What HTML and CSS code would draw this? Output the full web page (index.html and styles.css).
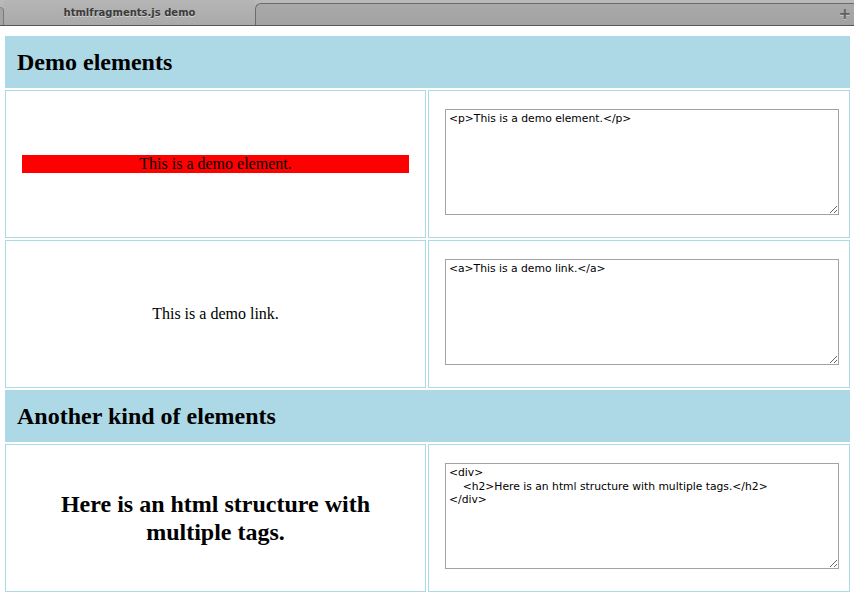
FILE: index.html
```html
<!DOCTYPE html>
<html>
<head>
<meta charset="utf-8">
<title>htmlfragments.js demo</title>
<link rel="stylesheet" href="styles.css">
</head>
<body>
<div class="tabbar">
  <div class="tab-edge"></div>
  <div class="tab-active"><span class="tab-title">htmlfragments.js demo</span></div>
  <div class="tab-rest"><span class="tab-plus">+</span></div>
</div>
<table class="demo">
  <colgroup><col class="col-left"><col class="col-right"></colgroup>
  <tr class="head-row">
    <td colspan="2" class="head-cell"><h2 class="section-title">Demo elements</h2></td>
  </tr>
  <tr class="item-row">
    <td class="render-cell"><p class="demo-red">This is a demo element.</p></td>
    <td class="code-cell"><textarea class="code" spellcheck="false">&lt;p&gt;This is a demo element.&lt;/p&gt;</textarea></td>
  </tr>
  <tr class="item-row">
    <td class="render-cell"><a class="demo-link">This is a demo link.</a></td>
    <td class="code-cell"><textarea class="code" spellcheck="false">&lt;a&gt;This is a demo link.&lt;/a&gt;</textarea></td>
  </tr>
  <tr class="head-row">
    <td colspan="2" class="head-cell"><h2 class="section-title">Another kind of elements</h2></td>
  </tr>
  <tr class="item-row">
    <td class="render-cell"><div><h2 class="demo-h2">Here is an html structure with multiple tags.</h2></div></td>
    <td class="code-cell"><textarea class="code" spellcheck="false">&lt;div&gt;
    &lt;h2&gt;Here is an html structure with multiple tags.&lt;/h2&gt;
&lt;/div&gt;</textarea></td>
  </tr>
</table>
</body>
</html>
```

FILE: styles.css
```css
html, body {
  margin: 0;
  padding: 0;
  background: #ffffff;
}

body {
  font-family: "Liberation Serif", "Times New Roman", serif;
  color: #000;
}

/* ---------- tab bar ---------- */
.tabbar {
  display: flex;
  height: 25px;
  border-bottom: 1px solid #575757;
  background: linear-gradient(#bababa, #acacac);
}

.tab-edge {
  width: 3px;
  margin-top: 7px;
  border-top-right-radius: 5px;
  border-right: 1px solid #7a7a7a;
  border-top: 1px solid #8a8a8a;
  background: #a4a4a4;
}

.tab-active {
  width: 251px;
  display: flex;
  align-items: center;
  justify-content: center;
  background: linear-gradient(#b6b6b6, #a9a9a9);
}

.tab-title {
  font-family: "DejaVu Sans", "Lucida Grande", sans-serif;
  font-weight: bold;
  font-size: 10px;
  color: #3b3b3b;
  text-shadow: 0 1px 0 rgba(255, 255, 255, 0.45);
  margin-left: 0;
}

.tab-rest {
  flex: 1;
  margin-top: 3px;
  border-top: 1px solid #6c6c6c;
  border-left: 1px solid #6c6c6c;
  border-top-left-radius: 6px;
  background: linear-gradient(#a9a9a9, #a2a2a2);
  display: flex;
  align-items: center;
  justify-content: flex-end;
}

.tab-plus {
  font-family: "DejaVu Sans", sans-serif;
  font-size: 15px;
  font-weight: bold;
  color: #5f5f5f;
  text-shadow: 0 1px 0 rgba(255, 255, 255, 0.4);
  margin-right: 3px;
  line-height: 1;
}

/* ---------- demo table ---------- */
.demo {
  width: 849px;
  margin: 8px 0 8px 3px;
  border-collapse: separate;
  border-spacing: 2px;
  table-layout: fixed;
}

.col-left { width: 421px; }
.col-right { width: 422px; }

.head-row { height: 52px; }

.head-cell {
  background: #add8e6;
  border: 1px solid #add8e6;
  padding: 0 12px 0 11px;
  vertical-align: middle;
}

.section-title {
  margin: 0;
  font-size: 24px;
  font-weight: bold;
  line-height: 28px;
}

.item-row { height: 148px; }

.render-cell,
.code-cell {
  border: 1px solid #add8e6;
  box-sizing: border-box;
  height: 148px;
}

.render-cell {
  padding: 0 16px;
  vertical-align: middle;
  text-align: center;
  font-size: 16px;
}

.demo-red {
  margin: 0;
  background: #ff0000;
  line-height: 18px;
}

.demo-link {
  color: #000;
}

.demo-h2 {
  margin: 0;
  font-size: 24px;
  font-weight: bold;
  line-height: 28px;
}

.code-cell {
  padding: 18px 16px 0 16px;
  vertical-align: top;
}

.code {
  display: block;
  box-sizing: border-box;
  width: 394px;
  height: 106px;
  margin: 0;
  padding: 2px 3px;
  border: 1px solid #a3a3a3;
  font-family: "DejaVu Sans", "Lucida Grande", sans-serif;
  font-size: 10.75px;
  line-height: 13.5px;
  color: #000;
  background: #fff;
  resize: both;
}
```
